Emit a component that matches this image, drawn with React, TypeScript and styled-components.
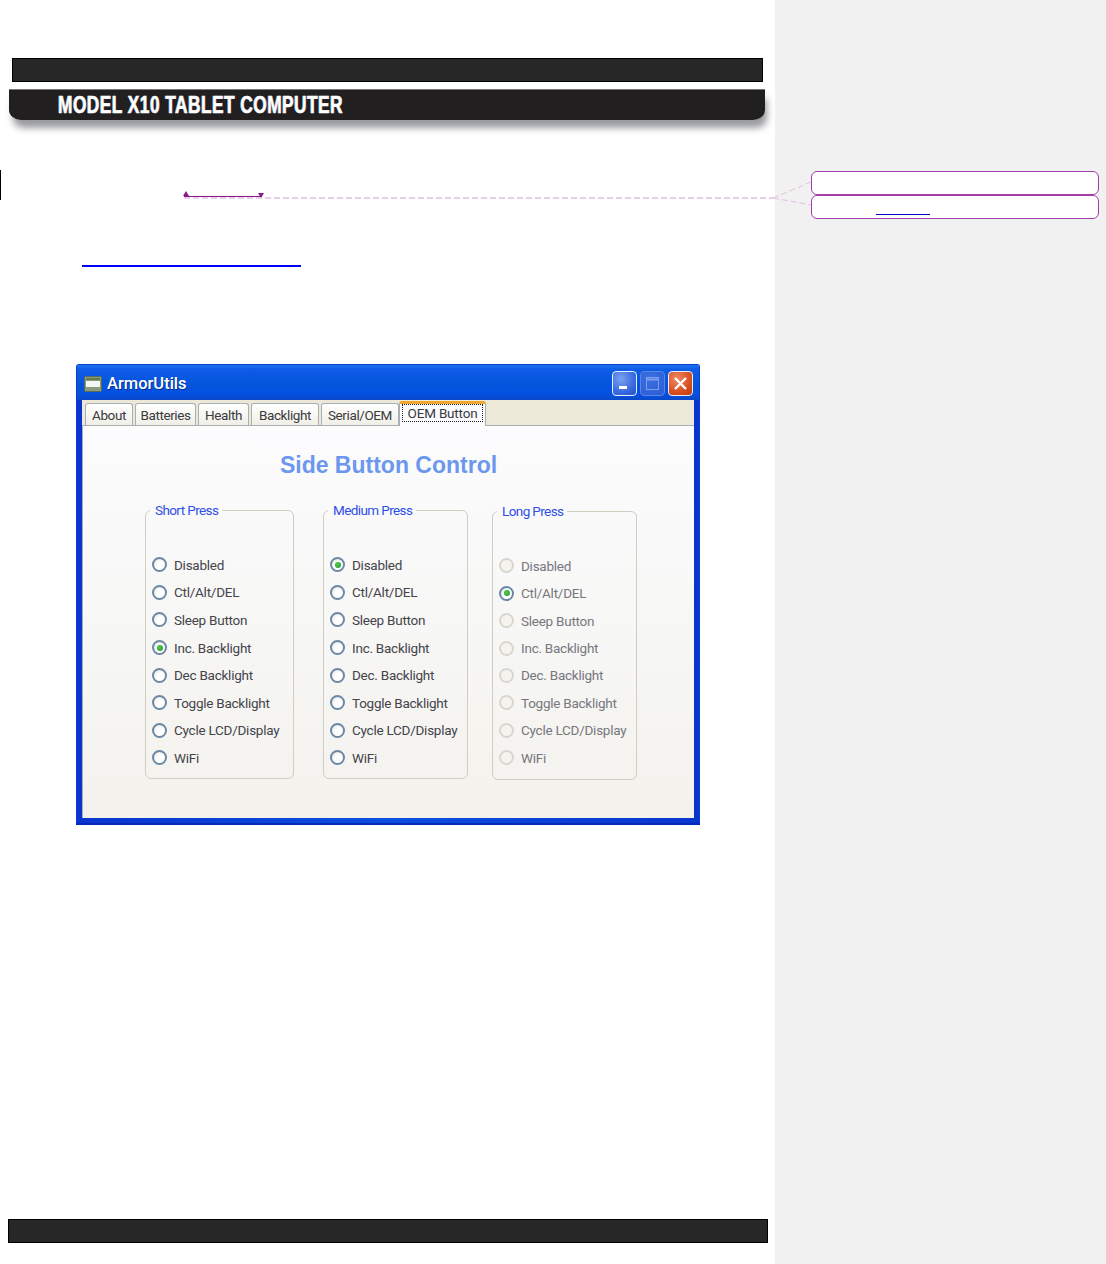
import React, { FC } from 'react';
import styled, { createGlobalStyle } from 'styled-components';

const GlobalStyle = createGlobalStyle`
    html, body {
        margin: 0;
        padding: 0;
        background: #ffffff;
    }
`;

const Page = styled.div`
    position: relative;
    display: grid;
    grid-template-columns: 775px 331px;
    width: 1106px;
    height: 1264px;
    overflow: hidden;
    font-family: Roboto, "Liberation Sans", sans-serif;
`;

const Sheet = styled.main`
    display: flex;
    flex-direction: column;
    padding-top: 58px;
    box-sizing: border-box;
`;

const Margin = styled.aside`
    background: #f1f1f1;
    padding: 171px 7px 0 36px;
    display: flex;
    flex-direction: column;
    gap: 0;
`;

const CommentBox = styled.div`
    height: 24px;
    box-sizing: border-box;
    background: #ffffff;
    border: 1px solid #a23fa8;
    border-radius: 6px;
    padding: 18px 0 0 64px;
`;

const CommentLink = styled.div`
    width: 54px;
    height: 1px;
    background: #0000cc;
`;

const DarkBar = styled.div<{ $left: number; $width: number }>`
    height: 24px;
    width: ${p => p.$width}px;
    margin-left: ${p => p.$left}px;
    box-sizing: border-box;
    background: #272727;
    border: 1px solid #000000;
`;

const Footer = styled(DarkBar)`
    margin-top: auto;
    margin-bottom: 21px;
`;

const Banner = styled.header`
    margin: 7px 0 0 9px;
    width: 756px;
    height: 31px;
    box-sizing: border-box;
    padding-left: 49px;
    background: #211f1f;
    border-top: 1px solid #77777a;
    border-radius: 0 0 12px 12px / 0 0 10px 10px;
    box-shadow: 3px 9px 7px -1px #9a9ba0;
    display: flex;
    align-items: center;
`;

const BannerTitle = styled.h1`
    margin: 0;
    color: #ffffff;
    font-family: "Liberation Sans", sans-serif;
    font-size: 23.5px;
    font-weight: 700;
    letter-spacing: 0.6px;
    white-space: nowrap;
    transform: scaleX(0.738);
    transform-origin: left center;
    -webkit-text-stroke: 0.6px #ffffff;
    text-shadow: 1px 0 0 #5a1a20, -1px 0 0 #2a6a90;
`;

const ChangedBlock = styled.div`
    margin-top: 50px;
    height: 30px;
    border-left: 1.5px solid #000000;
    padding-left: 183px;
    box-sizing: border-box;
`;

const Revision = styled.span`
    position: relative;
    display: block;
    width: 78px;
    height: 25px;
    margin-top: 0;
    padding-top: 1px;
    border-bottom: 1px solid #8a1a8a;
    box-sizing: content-box;

    &::before,
    &::after {
        content: '';
        position: absolute;
        width: 0;
        height: 0;
        border-left: 3px solid transparent;
        border-right: 3px solid transparent;
    }

    &::before {
        left: -1px;
        bottom: 0;
        border-bottom: 5px solid #8a1a8a;
    }

    &::after {
        right: -2px;
        bottom: -2px;
        border-top: 5px solid #8a1a8a;
    }
`;

const EmptyLink = styled.div`
    margin: 65px 0 0 82px;
    width: 219px;
    height: 2px;
    background: #0000ff;
`;

const XpWindow = styled.section`
    margin: 97px 0 0 76px;
    width: 624px;
    height: 461px;
    box-sizing: border-box;
    display: flex;
    flex-direction: column;
    padding: 0 5px 5px 5px;
    background: linear-gradient(90deg, #0a34d0, #0a4ee0 50%, #0a34d0);
    border: 1px solid #0a3fc8;
    border-bottom: 2px solid #0428b8;
    border-radius: 3px 3px 0 0;
`;

const TitleBar = styled.div`
    flex: 0 0 35px;
    margin: 0 -5px;
    padding: 2px 6px 0 7px;
    box-sizing: border-box;
    display: flex;
    align-items: center;
    background: linear-gradient(180deg, #1a72ee 0%, #0f5ce6 12%, #0454dc 55%, #0550e0 85%, #0a48c8 100%);
`;

const AppIcon = styled.svg`
    width: 18px;
    height: 16px;
    flex: none;
`;

const WindowTitle = styled.span`
    margin-left: 5px;
    color: #ffffff;
    font-size: 16.5px;
    font-weight: 500;
    text-shadow: 1px 1px 0 #0a2f90;
`;

const Controls = styled.div`
    margin-left: auto;
    display: flex;
    gap: 3px;
`;

const ControlButton = styled.div<{ $kind: 'active' | 'dim' | 'close' }>`
    width: 25px;
    height: 25px;
    box-sizing: border-box;
    display: flex;
    align-items: center;
    justify-content: center;
    border-radius: 4px;
    border: 1px solid ${p => (p.$kind === 'dim' ? '#5a86e6' : '#e8eefc')};
    background: ${p =>
        p.$kind === 'close'
            ? 'radial-gradient(circle at 35% 30%, #ee8a68, #d8501f 60%, #c03a10)'
            : p.$kind === 'dim'
              ? 'radial-gradient(circle at 35% 30%, #3a70e0, #2a5cd6)'
              : 'radial-gradient(circle at 35% 30%, #7aa2f0, #3a6ae0 60%, #2450c8)'};
`;

const TabStrip = styled.div`
    flex: 0 0 26px;
    box-sizing: border-box;
    display: flex;
    align-items: flex-end;
    padding-left: 3px;
    gap: 2px;
    background: #ece9d8;
    border-bottom: 1px solid #a8b0b4;
`;

const Tab = styled.div<{ $width: number; $active?: boolean }>`
    position: relative;
    width: ${p => p.$width}px;
    height: ${p => (p.$active ? 25 : 22)}px;
    margin-left: ${p => (p.$active ? -2 : 0)}px;
    margin-bottom: ${p => (p.$active ? -1 : 0)}px;
    box-sizing: border-box;
    display: flex;
    justify-content: center;
    align-items: ${p => (p.$active ? 'flex-start' : 'center')};
    color: #3a3a40;
    font-size: 13.5px;
    letter-spacing: -0.4px;
    border: 1px solid #a8b0b4;
    border-bottom: none;
    border-top: ${p => (p.$active ? '3px solid #f0a830' : '1px solid #a8b0b4')};
    border-radius: 3px 3px 0 0;
    background: ${p => (p.$active ? '#fcfcfe' : 'linear-gradient(180deg, #ffffff, #f0efe6)')};
`;

const FocusText = styled.span`
    width: 81px;
    height: 18px;
    box-sizing: border-box;
    text-align: center;
    line-height: 16px;
    letter-spacing: -0.2px;
    border: 1px dotted #222222;
`;

const TabBody = styled.div`
    flex: 1;
    display: flex;
    flex-direction: column;
    background: linear-gradient(180deg, #fcfcfe, #f3f2ed);
    border-left: 1px solid #a8b0b4;
`;

const PanelTitle = styled.h2`
    margin: 26px 0 0;
    text-align: center;
    color: #6b97ee;
    font-family: "Liberation Sans", sans-serif;
    font-size: 23px;
    line-height: 26px;
    font-weight: 700;
`;

const Groups = styled.div`
    display: flex;
    align-items: flex-start;
    margin-top: 23px;
    padding-left: 62px;
`;

const Group = styled.fieldset<{ $width: number; $gap: number; $drop?: boolean }>`
    width: ${p => p.$width}px;
    height: 278px;
    margin: ${p => (p.$drop ? 1 : 0)}px 0 0 ${p => p.$gap}px;
    padding: 32px 0 0 6px;
    box-sizing: border-box;
    border: 1px solid #cfcec0;
    border-radius: 6px;
`;

const GroupLabel = styled.legend`
    margin-left: -2px;
    padding: 0 4px 0 5px;
    color: #2f4fe8;
    font-size: 13.5px;
    line-height: 18px;
    letter-spacing: -0.6px;
`;

const Option = styled.label<{ $pitch: number; $muted?: boolean }>`
    display: flex;
    align-items: center;
    gap: 7px;
    height: ${p => p.$pitch}px;
    color: ${p => (p.$muted ? '#77777e' : '#44444c')};
    font-size: 13.5px;
    letter-spacing: -0.25px;
    white-space: nowrap;
`;

const Radio = styled.input`
    appearance: none;
    flex: none;
    margin: 0;
    width: 15px;
    height: 15px;
    box-sizing: border-box;
    border-radius: 50%;
    border: 2px solid #6b88a6;
    background: radial-gradient(circle at 65% 65%, #ffffff 40%, #e4e2d8);
    display: grid;
    place-items: center;

    &:disabled {
        border-color: #d8d7cf;
        background: #f4f3ee;
    }

    &:checked::after {
        content: '';
        width: 6px;
        height: 6px;
        border-radius: 50%;
        background: radial-gradient(circle at 40% 40%, #4ed04e, #1a8f26);
    }
`;

const CommentLeaders = styled.svg`
    position: absolute;
    inset: 0;
    pointer-events: none;
`;

const choices = (second: string, fourth: string, fifth: string) => [
    'Disabled',
    second,
    'Sleep Button',
    fourth,
    fifth,
    'Toggle Backlight',
    'Cycle LCD/Display',
    'WiFi',
];

const tabs: [string, number][] = [
    ['About', 48],
    ['Batteries', 61],
    ['Health', 51],
    ['Backlight', 68],
    ['Serial/OEM', 78],
];

const PressGroup: FC<{
    title: string;
    width: number;
    gap: number;
    options: string[];
    selected: number;
    pitch?: number;
    disabled?: boolean;
}> = ({ title, width, gap, options, selected, pitch = 27.6, disabled }) => (
    <Group $width={width} $gap={gap} $drop={disabled}>
        <GroupLabel>{title}</GroupLabel>
        {options.map((option, i) => (
            <Option key={option} $pitch={pitch} $muted={disabled}>
                <Radio
                    type="radio"
                    name={title}
                    readOnly
                    checked={i === selected}
                    disabled={disabled && i !== selected}
                />
                {option}
            </Option>
        ))}
    </Group>
);

export default function App() {
    return (
        <Page>
            <GlobalStyle />
            <Sheet>
                <DarkBar $left={12} $width={751} />
                <Banner>
                    <BannerTitle>MODEL X10 TABLET COMPUTER</BannerTitle>
                </Banner>
                <ChangedBlock>
                    <Revision />
                </ChangedBlock>
                <EmptyLink />
                <XpWindow>
                    <TitleBar>
                        <AppIcon viewBox="0 0 18 16">
                            <rect x="0.5" y="0.5" width="17" height="15" rx="1" fill="#8a9a7a" stroke="#5a6a5a" />
                            <rect x="2" y="5" width="14" height="6" fill="#f4f6f4" />
                            <rect x="2" y="2" width="14" height="2" fill="#5f7f4f" />
                        </AppIcon>
                        <WindowTitle>ArmorUtils</WindowTitle>
                        <Controls>
                            <ControlButton $kind="active">
                                <svg width="15" height="15" viewBox="0 0 15 15">
                                    <rect x="2" y="10" width="8" height="3" fill="#ffffff" />
                                </svg>
                            </ControlButton>
                            <ControlButton $kind="dim">
                                <svg width="15" height="15" viewBox="0 0 15 15" fill="none" stroke="#7f9fec">
                                    <rect x="1.5" y="1.5" width="12" height="12" />
                                    <path d="M1.5 3.5h12" strokeWidth="2" />
                                </svg>
                            </ControlButton>
                            <ControlButton $kind="close">
                                <svg width="15" height="15" viewBox="0 0 15 15" stroke="#ffffff" strokeWidth="2.4">
                                    <path d="M2 2l11 11M13 2L2 13" />
                                </svg>
                            </ControlButton>
                        </Controls>
                    </TitleBar>
                    <TabStrip>
                        {tabs.map(([label, width]) => (
                            <Tab key={label} $width={width}>
                                {label}
                            </Tab>
                        ))}
                        <Tab $width={87} $active>
                            <FocusText>OEM Button</FocusText>
                        </Tab>
                    </TabStrip>
                    <TabBody>
                        <PanelTitle>Side Button Control</PanelTitle>
                        <Groups>
                            <PressGroup
                                title="Short Press"
                                width={149}
                                gap={0}
                                options={choices('Ctl/Alt/DEL', 'Inc. Backlight', 'Dec Backlight')}
                                selected={3}
                            />
                            <PressGroup
                                title="Medium Press"
                                width={145}
                                gap={29}
                                options={choices('Ctl/Alt/DEL', 'Inc. Backlight', 'Dec. Backlight')}
                                selected={0}
                            />
                            <PressGroup
                                title="Long Press"
                                width={145}
                                gap={24}
                                options={choices('Ctl/Alt/DEL', 'Inc. Backlight', 'Dec. Backlight')}
                                selected={1}
                                pitch={27.45}
                                disabled
                            />
                        </Groups>
                    </TabBody>
                </XpWindow>
                <Footer $left={8} $width={760} />
            </Sheet>
            <Margin>
                <CommentBox />
                <CommentBox>
                    <CommentLink />
                </CommentBox>
            </Margin>
            <CommentLeaders width="1106" height="1264" viewBox="0 0 1106 1264" fill="none" stroke="#e2c0e4">
                <path d="M184 198H773" strokeWidth="1.5" strokeDasharray="6 3" />
                <path d="M773 198L811 182M773 198L811 205" strokeDasharray="6 3" />
            </CommentLeaders>
        </Page>
    );
}
